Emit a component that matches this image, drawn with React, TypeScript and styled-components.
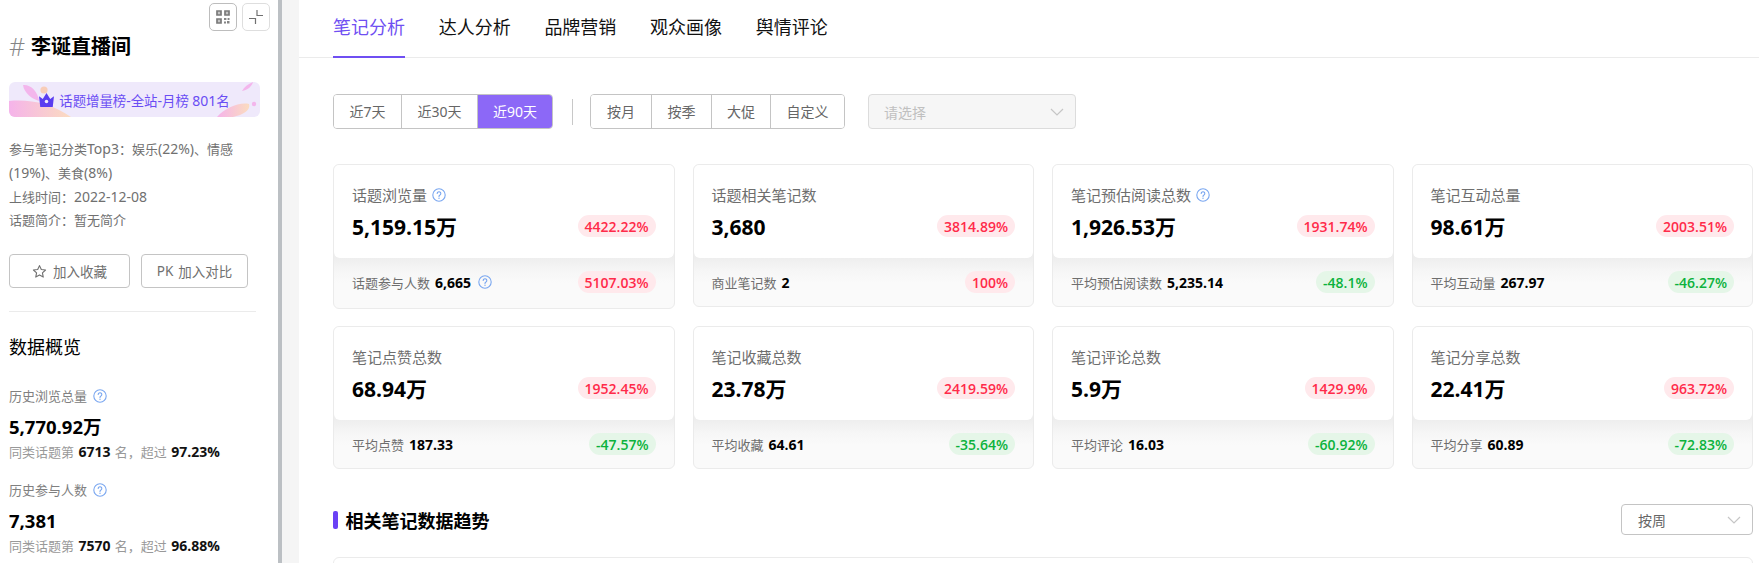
import React from "react";
import styled, { createGlobalStyle } from "styled-components";

const Global = createGlobalStyle`
  html, body { margin: 0; padding: 0; height: 100%; background: #fff; overflow: hidden; }
  #root { height: 100%; }
  * { box-sizing: border-box; }
  body { font-family: "Open Sans", "Noto Sans CJK SC", sans-serif; color: #000; }
`;

const Page = styled.div`
  display: flex;
  width: 1759px;
  height: 563px;
  overflow: hidden;
`;

const Side = styled.aside`
  flex: 0 0 282px;
  height: 563px;
  overflow: hidden;
  padding: 3px 26px 0 9px;
  border-right: 4px solid #bcc0c4;
  display: flex;
  flex-direction: column;
`;
const SideTools = styled.div`
  display: flex;
  justify-content: flex-end;
  gap: 5px;
  margin-right: -18px;
`;
const ToolButton = styled.button<{ $strong?: boolean }>`
  width: 28px;
  height: 28px;
  padding: 0;
  background: #fff;
  border: 1px solid ${(p) => (p.$strong ? "#bdbdbd" : "#dedede")};
  border-radius: 5px;
  display: flex;
  align-items: center;
  justify-content: center;
`;
const TopicTitle = styled.h1`
  margin: 0;
  height: 30px;
  display: flex;
  align-items: center;
  font-size: 20px;
  line-height: 30px;
  font-weight: 700;
  font-family: "Noto Sans CJK SC", sans-serif;
`;
const Hash = styled.span`
  color: #858585;
  font-weight: 300;
  font-size: 25px;
  width: 22px;
  font-family: "Open Sans", sans-serif;
`;
const Latin = styled.span`
  font-size: 14px;
`;
const Banner = styled.div`
  position: relative;
  margin-top: 21px;
  width: 251px;
  height: 35px;
  border-radius: 6px;
  background: #efe9fb;
  overflow: hidden;
  display: flex;
  align-items: center;
  justify-content: center;
  color: #6a4df4;
  font-size: 13.4px;
  font-family: "Noto Sans", "Noto Sans CJK SC", sans-serif;
`;
const BannerArt = styled.svg`
  position: absolute;
  left: 0;
  top: 0;
`;
const BannerInner = styled.span`
  position: relative;
  display: flex;
  align-items: center;
  gap: 5px;
  white-space: pre;
`;
const Meta = styled.div`
  margin-top: 20px;
  font-size: 13px;
  line-height: 23px;
  color: #707070;
  width: 232px;
  font-family: "Noto Sans", "Noto Sans CJK SC", sans-serif;
`;
const ActionRow = styled.div`
  display: flex;
  gap: 11px;
  margin-top: 22px;
`;
const ActionButton = styled.button<{ $w: number; $gap: number }>`
  width: ${(p) => p.$w}px;
  height: 34px;
  background: #fff;
  border: 1px solid #c4c4c4;
  border-radius: 4px;
  color: #707070;
  font-size: 13.5px;
  font-family: "Noto Sans", "Noto Sans CJK SC", sans-serif;
  display: flex;
  align-items: center;
  justify-content: center;
  gap: ${(p) => p.$gap}px;
  padding: 0;
`;
const SideRule = styled.div`
  margin-top: 23px;
  width: 247px;
  height: 1px;
  background: #ebebeb;
`;
const OverviewTitle = styled.h2`
  margin: 21px 0 0;
  font-size: 18px;
  line-height: 26px;
  font-weight: 400;
  font-family: "Noto Sans CJK SC", sans-serif;
`;
const Stat = styled.div<{ $gap: number }>`
  margin-top: ${(p) => p.$gap}px;
`;
const StatLabel = styled.div`
  display: flex;
  align-items: center;
  gap: 6px;
  font-size: 13px;
  line-height: 18px;
  color: #808080;
  font-family: "Noto Sans CJK SC", sans-serif;
`;
const StatValue = styled.div`
  margin-top: 9px;
  font-size: 18.5px;
  line-height: 26px;
  font-weight: 700;
`;
const StatNote = styled.div`
  margin-top: 2px;
  font-size: 13px;
  line-height: 20px;
  color: #999;
  font-family: "Noto Sans", "Noto Sans CJK SC", sans-serif;
  white-space: nowrap;
  b { color: #111; font-size: 14px; font-weight: 700; margin: 0 1px; font-family: "Open Sans", sans-serif; }
`;

const Gutter = styled.div`
  flex: 0 0 17px;
  background: #f5f5f5;
`;
const Main = styled.main`
  flex: 1;
  min-width: 0;
  background: #fff;
`;
const Tabs = styled.nav`
  height: 58px;
  border-bottom: 1px solid #ebebeb;
  padding-left: 34px;
  display: flex;
  gap: 33.7px;
`;
const Tab = styled.div<{ $active?: boolean }>`
  height: 58px;
  padding-top: 13px;
  font-size: 18px;
  line-height: 26px;
  font-family: "Noto Sans CJK SC", sans-serif;
  color: ${(p) => (p.$active ? "#6f4ff2" : "#111")};
  border-bottom: 2px solid ${(p) => (p.$active ? "#6f4ff2" : "transparent")};
`;
const Body = styled.div`
  padding: 36px 6px 0 34px;
`;
const Filters = styled.div`
  display: flex;
  align-items: center;
  height: 35px;
`;
const Segments = styled.div`
  display: flex;
  height: 35px;
  border: 1px solid #c4c4c4;
  border-radius: 4px;
  overflow: hidden;
`;
const Segment = styled.div<{ $w: number; $on?: boolean }>`
  width: ${(p) => p.$w}px;
  display: flex;
  align-items: center;
  justify-content: center;
  font-size: 14px;
  padding-bottom: 1px;
  font-family: "Noto Sans", "Noto Sans CJK SC", sans-serif;
  color: ${(p) => (p.$on ? "#fff" : "#666")};
  background: ${(p) => (p.$on ? "#8c68f7" : "#fff")};
  & + & { border-left: 1px solid #c4c4c4; }
`;
const VRule = styled.div`
  width: 1px;
  height: 26px;
  margin: 0 17px 0 19px;
  background: #c8c8c8;
`;
const SelectBox = styled.div<{ $w: number; $h: number; $off?: boolean }>`
  width: ${(p) => p.$w}px;
  height: ${(p) => p.$h}px;
  border: 1px solid ${(p) => (p.$off ? "#dcdcdc" : "#c4c4c4")};
  border-radius: 4px;
  background: ${(p) => (p.$off ? "#f6f6f6" : "#fff")};
  color: ${(p) => (p.$off ? "#c0c0c0" : "#666")};
  font-size: 14px;
  font-family: "Noto Sans CJK SC", sans-serif;
  display: flex;
  align-items: center;
  justify-content: space-between;
  padding: 0 11px 0 ${(p) => (p.$off ? 15 : 16)}px;
`;
const FirstSelect = styled.div`
  margin-left: 23px;
`;
const Grid = styled.div`
  margin-top: 35px;
  display: grid;
  grid-template-columns: repeat(4, 341.5px);
  column-gap: 18px;
  row-gap: 17px;
  align-items: start;
`;
const Card = styled.section<{ $tall?: boolean }>`
  height: ${(p) => (p.$tall ? 145 : 143)}px;
  border: 1px solid #ebebeb;
  border-radius: 6px;
  background: linear-gradient(
    to bottom,
    #eeeeee 0,
    #eeeeee 93px,
    #f6f6f6 106px,
    #fafafa 118px
  );
  overflow: hidden;
  display: flex;
  flex-direction: column;
`;
const CardTop = styled.div`
  height: 93px;
  flex: none;
  background: #fff;
  border-radius: 0 0 6px 6px;
  padding: 20px 18px 0 18px;
`;
const CardLabel = styled.div`
  display: flex;
  align-items: center;
  gap: 5px;
  font-size: 15px;
  line-height: 20px;
  color: #6e6e6e;
  font-family: "Noto Sans CJK SC", sans-serif;
`;
const Row = styled.div`
  display: flex;
  align-items: center;
  justify-content: space-between;
`;
const BigRow = styled(Row)`
  margin-top: 10px;
  height: 22px;
`;
const BigNumber = styled.div`
  font-size: 21px;
  font-weight: 700;
  line-height: 22px;
  padding-top: 2px;
`;
const CardBottom = styled(Row)`
  padding: 13px 18px 0 18px;
`;
const SubLabel = styled.div`
  display: flex;
  align-items: center;
  font-size: 13px;
  color: #6e6e6e;
  font-family: "Noto Sans", "Noto Sans CJK SC", sans-serif;
  b { color: #000; font-size: 14px; font-weight: 700; margin-left: 5px; font-family: "Open Sans", sans-serif; }
  svg { margin-left: 7px; }
`;
const Pill = styled.span<{ $up: boolean }>`
  height: 22px;
  padding: 0 7px;
  border-radius: 11px;
  display: inline-flex;
  align-items: center;
  font-size: 14px;
  font-weight: 600;
  color: ${(p) => (p.$up ? "#ff2b4a" : "#0cb23c")};
  background: ${(p) => (p.$up ? "#ffe9ec" : "#e5f6e8")};
`;
const Section = styled.div`
  margin-top: 35px;
  display: flex;
  align-items: center;
  justify-content: space-between;
  height: 31px;
`;
const SectionTitle = styled.h3`
  margin: 0;
  display: flex;
  align-items: center;
  gap: 8px;
  font-size: 18px;
  line-height: 26px;
  font-weight: 700;
  font-family: "Noto Sans CJK SC", sans-serif;
  &::before {
    content: "";
    width: 4.5px;
    height: 18px;
    border-radius: 2px;
    background: #6a41f5;
  }
`;
const ChartCard = styled.div`
  margin-top: 22px;
  height: 60px;
  border: 1px solid #ebebeb;
  border-radius: 6px;
`;

const Help = () => (
  <svg width="14" height="14" viewBox="0 0 14 14" fill="none">
    <circle cx="7" cy="7" r="6.2" stroke="#7aa7f0" strokeWidth="1.1" />
    <path d="M5.2 5.5a1.8 1.8 0 1 1 2.7 1.6c-.6.3-.9.7-.9 1.4" stroke="#7aa7f0" strokeWidth="1.1" strokeLinecap="round" />
    <circle cx="7" cy="10.3" r=".7" fill="#7aa7f0" />
  </svg>
);
const Chevron = () => (
  <svg width="14" height="8" viewBox="0 0 14 8" fill="none">
    <path d="M1 1l6 6 6-6" stroke="#c6c6c6" strokeWidth="1.2" />
  </svg>
);
const QrIcon = () => (
  <svg width="14" height="14" viewBox="0 0 14 14" fill="none">
    <path d="M1 1h4v4H1zM9 1h4v4H9zM1 9h4v4H1z" stroke="#7a7a7a" strokeWidth="1.7" fill="#c4c4c4" />
    <path d="M8 8h2.4v2H8zM11.6 8h1.9v2h-1.9zM8 11.6h2v1.9H8zM11 11h2.5v2.5H11z" fill="#858585" />
  </svg>
);
const CollapseIcon = () => (
  <svg width="16" height="16" viewBox="0 0 16 16" fill="none">
    <path d="M9 1v5.5h6M1 9.5h6.5V15" stroke="#707070" strokeWidth="1.2" />
  </svg>
);
const Star = () => (
  <svg width="15" height="15" viewBox="0 0 24 24" fill="none" stroke="#707070" strokeWidth="1.8" strokeLinejoin="round">
    <path d="M12 2.6l2.9 6.2 6.8.8-5 4.6 1.3 6.7-6-3.4-6 3.4 1.3-6.7-5-4.6 6.8-.8z" />
  </svg>
);
const Crown = () => (
  <svg width="15" height="14" viewBox="0 0 16 15">
    <path d="M0 3.5l4 3L8 0l4 6.5 4-3-1.3 11.5H1.3z" fill="#5a3df0" />
    <circle cx="8" cy="9" r="1.9" fill="#efe9fb" />
  </svg>
);

const cards = [
  { label: "话题浏览量", help: true, value: "5,159.15万", pct: "4422.22%", up: true, sub: "话题参与人数", subValue: "6,665", subHelp: true, subPct: "5107.03%", subUp: true },
  { label: "话题相关笔记数", value: "3,680", pct: "3814.89%", up: true, sub: "商业笔记数", subValue: "2", subPct: "100%", subUp: true },
  { label: "笔记预估阅读总数", help: true, value: "1,926.53万", pct: "1931.74%", up: true, sub: "平均预估阅读数", subValue: "5,235.14", subPct: "-48.1%", subUp: false },
  { label: "笔记互动总量", value: "98.61万", pct: "2003.51%", up: true, sub: "平均互动量", subValue: "267.97", subPct: "-46.27%", subUp: false },
  { label: "笔记点赞总数", value: "68.94万", pct: "1952.45%", up: true, sub: "平均点赞", subValue: "187.33", subPct: "-47.57%", subUp: false },
  { label: "笔记收藏总数", value: "23.78万", pct: "2419.59%", up: true, sub: "平均收藏", subValue: "64.61", subPct: "-35.64%", subUp: false },
  { label: "笔记评论总数", value: "5.9万", pct: "1429.9%", up: true, sub: "平均评论", subValue: "16.03", subPct: "-60.92%", subUp: false },
  { label: "笔记分享总数", value: "22.41万", pct: "963.72%", up: true, sub: "平均分享", subValue: "60.89", subPct: "-72.83%", subUp: false },
];

export default function App() {
  return (
    <Page>
      <Global />
      <Side>
        <SideTools>
          <ToolButton $strong><QrIcon /></ToolButton>
          <ToolButton><CollapseIcon /></ToolButton>
        </SideTools>
        <TopicTitle><Hash>#</Hash>李诞直播间</TopicTitle>
        <Banner>
          <BannerArt width="251" height="35" viewBox="0 0 251 35">
            <defs>
              <linearGradient id="sw" x1="0" y1="0" x2="1" y2="0">
                <stop offset="0" stopColor="#f5b3ea" />
                <stop offset="1" stopColor="#fbdcc0" />
              </linearGradient>
            </defs>
            <path d="M0 19c20-2 42 2 62 16H0z" fill="url(#sw)" />
            <path d="M14 3c7-1 15 6 16 16-7-2-15-8-16-16z" fill="#f3b6ec" />
            <circle cx="35" cy="8" r="3.6" fill="#f8cdb8" />
            <path d="M208 35c8-9 22-15 32-13 2 6-6 11-16 13z" fill="url(#sw)" />
            <path d="M233 9c2-4 6-7 11-9-1 4-5 8-11 9z" fill="#f3b6ec" />
            <circle cx="245" cy="22" r="2.2" fill="#f3b6ec" />
          </BannerArt>
          <BannerInner>
            <Crown />
            <span>话题增量榜<Latin>-</Latin>全站<Latin>-</Latin>月榜 <Latin>801</Latin>名</span>
          </BannerInner>
        </Banner>
        <Meta>
          参与笔记分类<Latin>Top3</Latin>：娱乐<Latin>(22%)</Latin>、情感<Latin>(19%)</Latin>、美食<Latin>(8%)</Latin>
          <br />上线时间：<Latin>2022-12-08</Latin>
          <br />话题简介：暂无简介
        </Meta>
        <ActionRow>
          <ActionButton $w={121} $gap={6}><Star />加入收藏</ActionButton>
          <ActionButton $w={107} $gap={5}><span>PK</span>加入对比</ActionButton>
        </ActionRow>
        <SideRule />
        <OverviewTitle>数据概览</OverviewTitle>
        <Stat $gap={28}>
          <StatLabel>历史浏览总量<Help /></StatLabel>
          <StatValue>5,770.92万</StatValue>
          <StatNote>同类话题第 <b>6713</b> 名，超过 <b>97.23%</b></StatNote>
        </Stat>
        <Stat $gap={19}>
          <StatLabel>历史参与人数<Help /></StatLabel>
          <StatValue>7,381</StatValue>
          <StatNote>同类话题第 <b>7570</b> 名，超过 <b>96.88%</b></StatNote>
        </Stat>
      </Side>
      <Gutter />
      <Main>
        <Tabs>
          <Tab $active>笔记分析</Tab>
          <Tab>达人分析</Tab>
          <Tab>品牌营销</Tab>
          <Tab>观众画像</Tab>
          <Tab>舆情评论</Tab>
        </Tabs>
        <Body>
          <Filters>
            <Segments>
              <Segment $w={67}>近7天</Segment>
              <Segment $w={76}>近30天</Segment>
              <Segment $w={75} $on>近90天</Segment>
            </Segments>
            <VRule />
            <Segments>
              <Segment $w={60}>按月</Segment>
              <Segment $w={60}>按季</Segment>
              <Segment $w={59}>大促</Segment>
              <Segment $w={74}>自定义</Segment>
            </Segments>
            <FirstSelect>
              <SelectBox $w={208} $h={35} $off>请选择<Chevron /></SelectBox>
            </FirstSelect>
          </Filters>
          <Grid>
            {cards.map((c) => (
              <Card key={c.label} $tall={c.subHelp}>
                <CardTop>
                  <CardLabel>{c.label}{c.help && <Help />}</CardLabel>
                  <BigRow>
                    <BigNumber>{c.value}</BigNumber>
                    <Pill $up={c.up}>{c.pct}</Pill>
                  </BigRow>
                </CardTop>
                <CardBottom>
                  <SubLabel>{c.sub}<b>{c.subValue}</b>{c.subHelp && <Help />}</SubLabel>
                  <Pill $up={c.subUp}>{c.subPct}</Pill>
                </CardBottom>
              </Card>
            ))}
          </Grid>
          <Section>
            <SectionTitle>相关笔记数据趋势</SectionTitle>
            <SelectBox $w={132} $h={31}>按周<Chevron /></SelectBox>
          </Section>
          <ChartCard />
        </Body>
      </Main>
    </Page>
  );
}
